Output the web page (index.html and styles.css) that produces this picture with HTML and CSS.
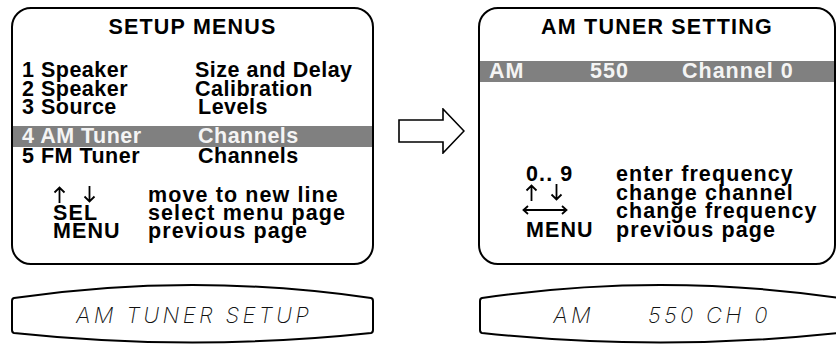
FILE: index.html
```
<!DOCTYPE html>
<html lang="en">
<head>
	<meta charset="UTF-8">
	<title>AM Tuner Setup</title>
	<link rel="stylesheet" href="styles.css">
</head>
<body>
	<div class="page">
		<div class="screens">
			<div class="panel panel-left">
				<div class="title">SETUP MENUS</div>
				<ul class="menu">
					<li><span>1 Speaker</span><span>Size and Delay</span></li>
					<li><span>2 Speaker</span><span>Calibration</span></li>
					<li><span>3 Source</span><span class="nudge">Levels</span></li>
					<li class="sel"><span>4 AM Tuner</span><span class="nudge">Channels</span></li>
					<li><span>5 FM Tuner</span><span class="nudge">Channels</span></li>
				</ul>
				<ul class="keys keys-left">
					<li>
						<span class="arrows">
							<svg class="ud" width="13" height="17" viewBox="0 0 13 17"><path d="M6.5,1.5 V17 M1.5,6.5 L6.5,1.5 L11.5,6.5"/></svg>
							<svg class="ud" width="13" height="17" viewBox="0 0 13 17"><path d="M6.5,0 V15.5 M1.5,10.5 L6.5,15.5 L11.5,10.5"/></svg>
						</span>
						<span>move to new line</span>
					</li>
					<li><span>SEL</span><span>select menu page</span></li>
					<li><span>MENU</span><span>previous page</span></li>
				</ul>
			</div>

			<div class="go">
				<svg width="67" height="46" viewBox="0 0 67 46">
					<polygon points="1,12 45,12 45,1 66,23 45,45 45,34 1,34" fill="#fff" stroke="#000" stroke-width="1.6"/>
				</svg>
			</div>

			<div class="panel panel-right">
				<div class="title">AM TUNER SETTING</div>
				<div class="band"><span>AM</span><span>550</span><span>Channel 0</span></div>
				<ul class="keys keys-right">
					<li><span>0.. 9</span><span>enter frequency</span></li>
					<li>
						<span class="arrows">
							<svg class="ud" width="13" height="17" viewBox="0 0 13 17"><path d="M6.5,1.5 V17 M1.5,6.5 L6.5,1.5 L11.5,6.5"/></svg>
							<svg class="ud" width="13" height="17" viewBox="0 0 13 17"><path d="M6.5,0 V15.5 M1.5,10.5 L6.5,15.5 L11.5,10.5"/></svg>
						</span>
						<span>change channel</span>
					</li>
					<li>
						<span class="arrows lr">
							<svg class="side" width="23" height="10" viewBox="0 0 23 10"><path d="M23,5 H1.5 M6,1 L1.5,5 L6,9"/></svg>
							<svg class="side" width="23" height="10" viewBox="0 0 23 10"><path d="M0,5 H21.5 M17,1 L21.5,5 L17,9"/></svg>
						</span>
						<span>change frequency</span>
					</li>
					<li><span>MENU</span><span>previous page</span></li>
				</ul>
			</div>
		</div>

		<div class="lcds">
			<div class="lcd lcd-left">
				<svg class="lcd-frame" width="363" height="61" viewBox="0 0 363 61">
					<path d="M3,14 Q181.5,-12 360,14 Q362,14.5 362,17 L362,46 Q362,48.5 360,49 Q181.5,68 3,49 Q1,48.5 1,46 L1,17 Q1,14.5 3,14 Z" fill="none" stroke="#000" stroke-width="2"/>
				</svg>
				<span class="lcd-text">AM TUNER SETUP</span>
			</div>
			<div class="lcd lcd-right">
				<svg class="lcd-frame" width="363" height="61" viewBox="0 0 363 61">
					<path d="M3,14 Q181.5,-12 360,14 Q362,14.5 362,17 L362,46 Q362,48.5 360,49 Q181.5,68 3,49 Q1,48.5 1,46 L1,17 Q1,14.5 3,14 Z" fill="none" stroke="#000" stroke-width="2"/>
				</svg>
				<span class="lcd-text"><span>AM</span><span class="lcd-gap">550 CH 0</span></span>
			</div>
		</div>
	</div>
</body>
</html>
```
FILE: styles.css
```
html,body{margin:0;padding:0;overflow:hidden;background:#fff;}
ul,li{margin:0;padding:0;list-style:none;}
.page{
	width:836px;
	height:345px;
	font-family:"Liberation Sans",Arial,sans-serif;
	font-weight:bold;
	font-size:21.5px;
	color:#000;
}
.screens{display:flex;padding:7px 0 0 11px;}

/* the two menu screens */
.panel{
	box-sizing:border-box;
	height:258px;
	border:2px solid #000;
	border-radius:20px;
	padding-top:9px;
}
.panel-left{width:363px;}
.panel-right{width:358px;}
.title{
	line-height:18px;
	text-align:center;
	letter-spacing:1.2px;
}
.menu{margin-top:25px;letter-spacing:0.5px;}
.menu li{
	display:grid;
	grid-template-columns:173px 1fr;
	padding-left:9px;
	line-height:18.5px;
}
.menu .nudge{padding-left:3px;}
.menu .sel{
	margin-top:9.5px;
	line-height:21px;
	background-color:#808080;
	color:#f4f4f4;
}
.keys{letter-spacing:1.1px;}
.keys li{display:grid;}
.keys-left{margin-top:20px;}
.keys-left li{grid-template-columns:95px 1fr;padding-left:40px;line-height:18px;}
.keys-right{margin-top:83px;}
.keys-right li{grid-template-columns:90px 1fr;padding-left:46px;line-height:18.5px;}

/* key arrows */
.arrows{display:flex;align-items:baseline;gap:17px;}
.keys-right .arrows{gap:12px;margin-left:-1px;}
.arrows svg{fill:none;stroke:#000;stroke-width:1.8;}
.arrows .ud{vertical-align:baseline;}
.keys-right .arrows.lr{gap:0;margin-left:-4px;}
.arrows .side{position:relative;top:3px;}

.band{
	display:grid;
	grid-template-columns:101px 92px 1fr;
	margin-top:25px;
	padding-left:9px;
	line-height:21px;
	letter-spacing:1px;
	background-color:#808080;
	color:#f4f4f4;
}

/* arrow between the screens */
.go{width:104px;box-sizing:border-box;padding:101px 0 0 24px;}
.go svg{display:block;}

/* front panel displays */
.lcds{display:flex;gap:105px;padding:19px 0 0 11px;}
.lcd{
	position:relative;
	flex:none;
	width:363px;
	height:61px;
	display:flex;
	align-items:center;
	justify-content:center;
}
.lcd-frame{position:absolute;left:0;top:0;}
.lcd-text{
	position:relative;
	display:flex;
	padding-left:3px;
	font-family:Inter,"DejaVu Sans",sans-serif;
	font-weight:200;
	font-style:oblique;
	font-size:22px;
	letter-spacing:3.3px;
	white-space:pre;
	color:#111;
}
.lcd-gap{margin-left:54px;}
```
